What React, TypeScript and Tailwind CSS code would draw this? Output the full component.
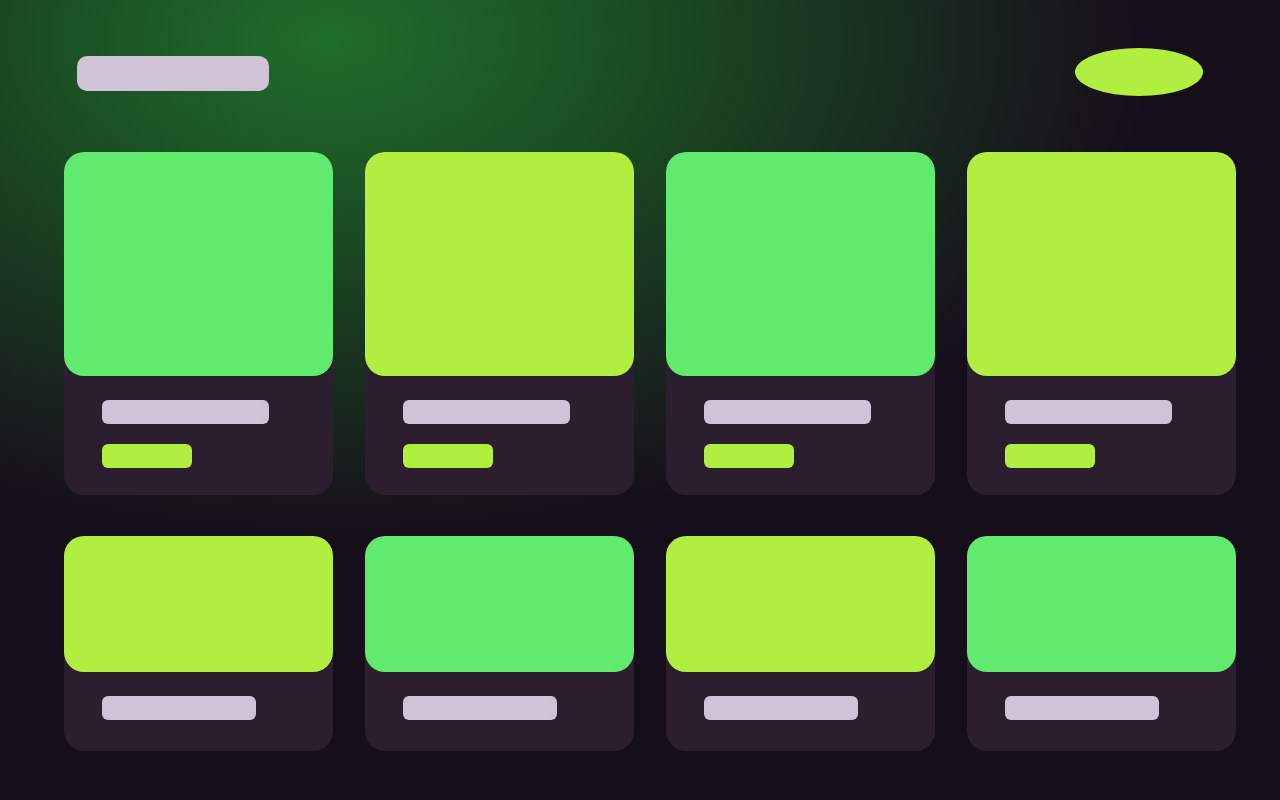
const cards = [
  { tone: "green", tall: true },
  { tone: "lime", tall: true },
  { tone: "green", tall: true },
  { tone: "lime", tall: true },
  { tone: "lime", tall: false },
  { tone: "green", tall: false },
  { tone: "lime", tall: false },
  { tone: "green", tall: false },
];

function Card({ tone, tall }: { tone: string; tall: boolean }) {
  return (
    <div className="flex flex-col rounded-[20px] bg-[#2a1e2f]">
      <div
        className={`rounded-[20px] ${tone === "green" ? "bg-[#60ea6e]" : "bg-[#b0ee40]"} ${
          tall ? "h-[224px]" : "h-[136px]"
        }`}
      />
      {tall ? (
        <div className="flex flex-col gap-5 px-[38px] pt-6 pb-[27px]">
          <div className="h-6 w-[167px] rounded-md bg-[#d0c3d8]" />
          <div className="h-6 w-[90px] rounded-md bg-[#b0ee40]" />
        </div>
      ) : (
        <div className="px-[38px] pt-6 pb-[31px]">
          <div className="h-6 w-[154px] rounded-md bg-[#d0c3d8]" />
        </div>
      )}
    </div>
  );
}

export default function App() {
  return (
    <div className="min-h-[800px] w-full bg-[#170e1b] bg-[radial-gradient(ellipse_820px_500px_at_330px_40px,#1f6e2b_0%,#1a4a22_40%,rgba(23,14,27,0)_100%)] pt-12 pl-16">
      <header className="flex w-[1172px] items-center justify-between pl-[13px] pr-[33px]">
        <div className="mt-[2px] h-[35px] w-[192px] rounded-[10px] bg-[#d0c3d8]" />
        <div className="h-12 w-32 rounded-[50%] bg-[#b0ee40]" />
      </header>
      <main className="mt-14 grid w-[1172px] grid-cols-4 gap-x-8 gap-y-[41px]">
        {cards.map((c, i) => (
          <Card key={i} tone={c.tone} tall={c.tall} />
        ))}
      </main>
    </div>
  );
}
